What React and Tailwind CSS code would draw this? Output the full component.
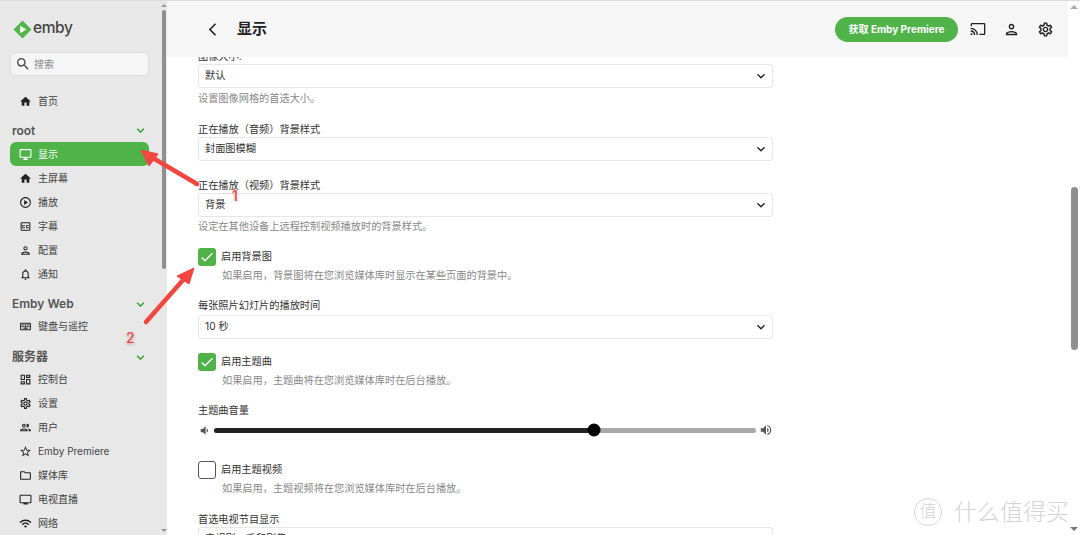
import React from 'react';
import {
  MdHome, MdOutlineDesktopWindows, MdOutlinePlayCircle, MdOutlineClosedCaption, MdOutlinePerson,
  MdOutlineNotifications, MdOutlineKeyboard, MdOutlineDashboard, MdOutlineSettings, MdOutlinePeople,
  MdStarBorder, MdOutlineFolder, MdOutlineTv, MdWifi, MdKeyboardArrowDown, MdOutlineCast,
  MdVolumeDown, MdVolumeUp, MdSearch, MdCheck, MdArrowBackIosNew,
} from 'react-icons/md';

const cjk = "font-['Inter','Noto_Sans_CJK_SC',sans-serif]";

function NavItem({ icon: Icon, label, active }) {
  return (
    <div className={`ml-[10px] mr-[11px] flex h-[24px] items-center gap-[6px] rounded-[6px] pl-[9px] text-[10px] ${active ? 'bg-[#4fb34a] text-white' : 'text-[#444]'}`}>
      <Icon size={13} className={active ? 'text-white' : 'text-[#222]'} />
      <span>{label}</span>
    </div>
  );
}

function SectionTitle({ label, className }) {
  return (
    <div className={`flex items-center justify-between pl-[12px] pr-[12px] ${className}`}>
      <span className="text-[12px] font-semibold text-[#555]">{label}</span>
      <MdKeyboardArrowDown size={15} className="text-[#1c9a1c]" />
    </div>
  );
}

function Sidebar() {
  return (
    <aside className="flex h-full w-[167px] shrink-0 bg-[#e8e8e8]">
      <div className="w-[160px]">
        <div className="flex h-[39px] items-end gap-[1px] pl-[13px]">
          <svg width="19" height="19" viewBox="0 0 20 20" className="mb-[1px]">
            <path d="M10 0.5 L19.5 10 L10 19.5 L0.5 10 Z" fill="#52b54b" />
            <path d="M7.5 6 L14 10 L7.5 14 Z" fill="#fff" />
          </svg>
          <span className="text-[15.5px] font-medium leading-[24px] tracking-tight text-[#444]">emby</span>
        </div>
        <div className="ml-[10px] mr-[11px] mt-[12px] flex h-[24px] items-center gap-[3px] rounded-[6px] border border-[#dcdcdc] bg-[#f6f6f6] pl-[4px] text-[10px] text-[#888]">
          <MdSearch size={16} className="text-[#444]" />
          <span>搜索</span>
        </div>
        <div className="mt-[13px]"><NavItem icon={MdHome} label="首页" /></div>
        <SectionTitle label="root" className="mt-[6px] h-[23px]" />
        <NavItem icon={MdOutlineDesktopWindows} label="显示" active />
        <NavItem icon={MdHome} label="主屏幕" />
        <NavItem icon={MdOutlinePlayCircle} label="播放" />
        <NavItem icon={MdOutlineClosedCaption} label="字幕" />
        <NavItem icon={MdOutlinePerson} label="配置" />
        <NavItem icon={MdOutlineNotifications} label="通知" />
        <SectionTitle label="Emby Web" className="mt-[6px] h-[24px]" />
        <div className="-mt-[2px]"><NavItem icon={MdOutlineKeyboard} label="键盘与遥控" /></div>
        <SectionTitle label="服务器" className="mt-[7px] h-[24px]" />
        <div className="-mt-[2px]"><NavItem icon={MdOutlineDashboard} label="控制台" /></div>
        <NavItem icon={MdOutlineSettings} label="设置" />
        <NavItem icon={MdOutlinePeople} label="用户" />
        <NavItem icon={MdStarBorder} label="Emby Premiere" />
        <NavItem icon={MdOutlineFolder} label="媒体库" />
        <NavItem icon={MdOutlineTv} label="电视直播" />
        <NavItem icon={MdWifi} label="网络" />
      </div>
      <div className="flex w-[7px] flex-col items-center">
        <div className="mt-[3px] h-0 w-0 border-x-[3px] border-b-[3px] border-x-transparent border-b-[#999]" />
        <div className="mt-[3px] h-[259px] w-[4px] rounded-full bg-[#8f8f8f]" />
        <div className="mt-auto mb-[3px] h-0 w-0 border-x-[3px] border-t-[3px] border-x-transparent border-t-[#999]" />
      </div>
    </aside>
  );
}

function Header() {
  return (
    <header className="flex h-[56px] shrink-0 items-center bg-[#f6f6f6] pl-[38px] pr-[14px]">
      <MdArrowBackIosNew size={15} className="text-[#222]" />
      <h1 className="ml-[17px] text-[15px] font-bold text-[#222]">显示</h1>
      <div className="ml-auto flex h-[25px] w-[123px] items-center justify-center rounded-full bg-[#4fb34a] text-[10px] font-bold text-white">
        获取 Emby Premiere
      </div>
      <MdOutlineCast size={16} className="ml-[12px] text-[#222]" />
      <MdOutlinePerson size={17} className="ml-[17px] text-[#222]" />
      <MdOutlineSettings size={17} className="ml-[17px] text-[#222]" />
    </header>
  );
}

function Select({ value, className = '' }) {
  return (
    <div className={`flex h-[24px] items-center justify-between rounded-[3px] border border-[#e6e6e6] pl-[6px] pr-[3px] text-[10.2px] text-[#333] ${className}`}>
      <span>{value}</span>
      <MdKeyboardArrowDown size={16} className="text-[#222]" />
    </div>
  );
}

function Label({ children, className = '' }) {
  return <div className={`h-[15px] text-[10.2px] leading-[15px] text-[#333] ${className}`}>{children}</div>;
}

function Hint({ children, className = '' }) {
  return <div className={`h-[15px] text-[10.2px] leading-[15px] text-[#888] ${className}`}>{children}</div>;
}

function Check({ checked, label, hint, className = '' }) {
  return (
    <div className={className}>
      <div className="flex items-center gap-[5px]">
        <div className={`flex h-[18px] w-[18px] items-center justify-center rounded-[3px] ${checked ? 'bg-[#4fb34a]' : 'border border-[#555]'}`}>
          {checked && <MdCheck size={16} className="text-white" />}
        </div>
        <span className="text-[10.2px] text-[#333]">{label}</span>
      </div>
      <Hint className="ml-[24px] mt-[2px]">{hint}</Hint>
    </div>
  );
}

function Form() {
  return (
    <div className="w-[575px] -mt-[8px] ml-[31px]">
      <Label>图像大小:</Label>
      <Select value="默认" />
      <Hint className="mt-[3px]">设置图像网格的首选大小。</Hint>
      <Label className="mt-[16px]">正在播放（音频）背景样式</Label>
      <Select value="封面图模糊" />
      <Label className="mt-[17px]">正在播放（视频）背景样式</Label>
      <Select value="背景" />
      <Hint className="mt-[2px]">设定在其他设备上远程控制视频播放时的背景样式。</Hint>
      <Check checked label="启用背景图" hint="如果启用，背景图将在您浏览媒体库时显示在某些页面的背景中。" className="mt-[14px]" />
      <Label className="mt-[15px]">每张照片幻灯片的播放时间</Label>
      <Select value="10 秒" className="mt-[2px]" />
      <Check checked label="启用主题曲" hint="如果启用，主题曲将在您浏览媒体库时在后台播放。" className="mt-[14px]" />
      <Label className="mt-[15px]">主题曲音量</Label>
      <div className="mt-[3px] flex h-[18px] items-center gap-[3px]">
        <MdVolumeDown size={13} className="text-[#555]" />
        <div className="relative flex h-[5px] flex-1 rounded-full bg-[#aaa]">
          <div className="w-[70.2%] rounded-full bg-[#222]" />
          <div className="absolute left-[70.2%] top-1/2 h-[13px] w-[13px] -translate-x-1/2 -translate-y-1/2 rounded-full bg-black" />
        </div>
        <MdVolumeUp size={14} className="text-[#555]" />
      </div>
      <Check label="启用主题视频" hint="如果启用，主题视频将在您浏览媒体库时在后台播放。" className="mt-[22px]" />
      <Label className="mt-[16px]">首选电视节目显示</Label>
      <Select value="电视剧、季和剧集" />
    </div>
  );
}

// red annotation arrows pasted on top of the screenshot
function Annotations() {
  return (
    <>
      <svg width="1080" height="535" className="absolute left-0 top-0">
        <g fill="#f2463f" stroke="#f2463f" strokeLinejoin="round">
          <path d="M197 183 L153 157" strokeWidth="4.5" strokeLinecap="round" />
          <path d="M141 149 L158 153 L149 165 Z" strokeWidth="1" />
          <path d="M146 321 L183 279" strokeWidth="4.5" strokeLinecap="round" />
          <path d="M194 267 L177 275 L189 283 Z" strokeWidth="1" />
        </g>
      </svg>
      <span className="absolute left-[232px] top-[186px] text-[14px] font-medium leading-[18px] text-[#ee4444] [text-shadow:0_0_2px_#fff,0_1px_3px_#888]">1</span>
      <span className="absolute left-[126px] top-[328px] text-[14px] font-medium leading-[18px] text-[#ee4444] [text-shadow:0_0_2px_#fff,0_1px_3px_#888]">2</span>
      <div className="absolute left-[914px] top-[497px] flex items-center gap-[12px] text-[#d4d4d4]">
        <span className="flex h-[28px] w-[28px] items-center justify-center rounded-full border border-[#d5d5d5] text-[17px] font-light">值</span>
        <span className="text-[23px] font-light leading-[28px]">什么值得买</span>
      </div>
    </>
  );
}

export default function App() {
  return (
    <div className={`relative flex h-[535px] w-[1080px] overflow-hidden border-t border-[#dcdcdc] bg-white ${cjk}`}>
      <Sidebar />
      <main className="flex h-full flex-1 flex-col overflow-hidden">
        <Header />
        <div className="flex-1 overflow-hidden"><Form /></div>
      </main>
      <div className="flex w-[12px] flex-col items-center bg-white">
        <div className="mt-[4px] h-0 w-0 border-x-[4px] border-b-[4px] border-x-transparent border-b-[#aaa]" />
        <div className="mt-[178px] h-[163px] w-[7px] rounded-full bg-[#8f8f8f]" />
        <div className="mt-auto mb-[4px] h-0 w-0 border-x-[4px] border-t-[4px] border-x-transparent border-t-[#777]" />
      </div>
      <Annotations />
    </div>
  );
}
